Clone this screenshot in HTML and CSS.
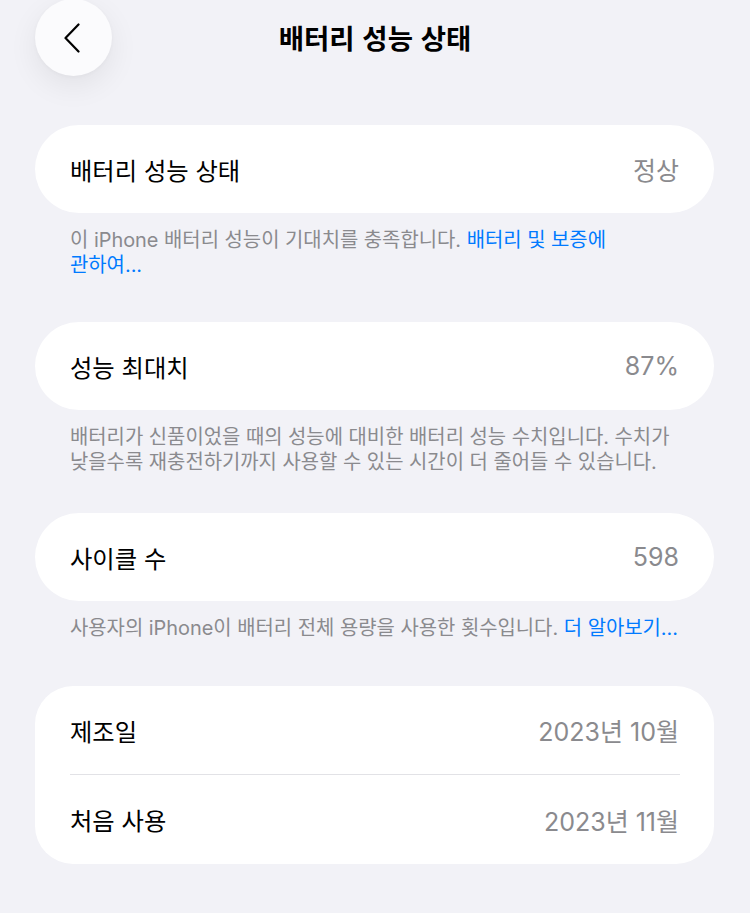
FILE: index.html
```html
<!DOCTYPE html>
<html lang="ko">
<head>
<meta charset="utf-8">
<title>배터리 성능 상태</title>
<link rel="stylesheet" href="styles.css">
</head>
<body>
<header class="header">
  <div class="header-side">
    <button class="back" aria-label="뒤로">
      <svg class="chev" width="18" height="30" viewBox="0 0 18 30"><path d="M15.5 1.5 L2.5 15 L15.5 28.5" fill="none" stroke="#000" stroke-width="2.2" stroke-linecap="round" stroke-linejoin="round"/></svg>
    </button>
  </div>
  <h1 class="title">배터리 성능 상태</h1>
  <div class="header-side"></div>
</header>
<main class="content">
  <section class="group">
    <div class="card">
      <div class="row"><span class="label">배터리 성능 상태</span><span class="value">정상</span></div>
    </div>
    <p class="footer">이 iPhone 배터리 성능이 기대치를 충족합니다. <span class="link">배터리 및 보증에<br>관하여...</span></p>
  </section>
  <section class="group group-2">
    <div class="card">
      <div class="row"><span class="label">성능 최대치</span><span class="value">87%</span></div>
    </div>
    <p class="footer">배터리가 신품이었을 때의 성능에 대비한 배터리 성능 수치입니다. 수치가 낮을수록 재충전하기까지 사용할 수 있는 시간이 더 줄어들 수 있습니다.</p>
  </section>
  <section class="group group-3">
    <div class="card">
      <div class="row"><span class="label">사이클 수</span><span class="value">598</span></div>
    </div>
    <p class="footer">사용자의 iPhone이 배터리 전체 용량을 사용한 횟수입니다. <span class="link">더 알아보기...</span></p>
  </section>
  <section class="group group-4">
    <div class="card card-list">
      <div class="row"><span class="label">제조일</span><span class="value">2023년 10월</span></div>
      <div class="sep"></div>
      <div class="row"><span class="label">처음 사용</span><span class="value">2023년 11월</span></div>
    </div>
  </section>
</main>
</body>
</html>
```
FILE: styles.css
```css
* { box-sizing: border-box; }
html, body {
  margin: 0;
  padding: 0;
  background: #f2f2f7;
}
body {
  width: 750px;
  height: 913px;
  overflow: hidden;
  font-family: "Inter", "Noto Sans CJK KR", sans-serif;
  color: #000;
}
.header {
  display: grid;
  grid-template-columns: 1fr auto 1fr;
  align-items: center;
  height: 76px;
}
.header-side { display: flex; align-items: center; }
.back {
  margin-left: 35px;
  width: 77px;
  height: 77px;
  margin-top: -1px;
  border: none;
  border-radius: 50%;
  background: #fbfbfd;
  box-shadow: 0 10px 30px rgba(0, 0, 0, 0.07), 0 1px 4px rgba(0, 0, 0, 0.03);
  display: flex;
  align-items: center;
  justify-content: center;
  padding: 0 4px 0 0;
}
.chev { display: block; }
.title {
  margin: -3px 0 0 0;
  font-family: "Noto Sans CJK KR", sans-serif;
  font-size: 27.5px;
  font-weight: 700;
  text-align: center;
}
.content {
  padding: 49px 36px 0 35px;
  display: flex;
  flex-direction: column;
}
.group-2 { margin-top: 44px; }
.group-3 { margin-top: 38px; }
.group-4 { margin-top: 45px; }
.card {
  background: #fff;
  border-radius: 44px;
  padding: 0 35px;
}
.card-list { border-radius: 38px; }
.row {
  height: 88px;
  display: flex;
  align-items: center;
  justify-content: space-between;
}
.card-list .row:last-child { height: 89px; }
.label {
  font-size: 24.3px;
  font-weight: 400;
  color: #000;
}
.value {
  font-size: 25px;
  color: #8a8a8e;
}
.sep {
  height: 1px;
  background: #e2e2e6;
  margin-right: -1px;
}
.footer {
  margin: 0;
  padding: 15px 25px 0 35px;
  font-size: 19.9px;
  line-height: 25px;
  color: #8a8a8e;
  word-break: keep-all;
}
.link { color: #007aff; }
```
